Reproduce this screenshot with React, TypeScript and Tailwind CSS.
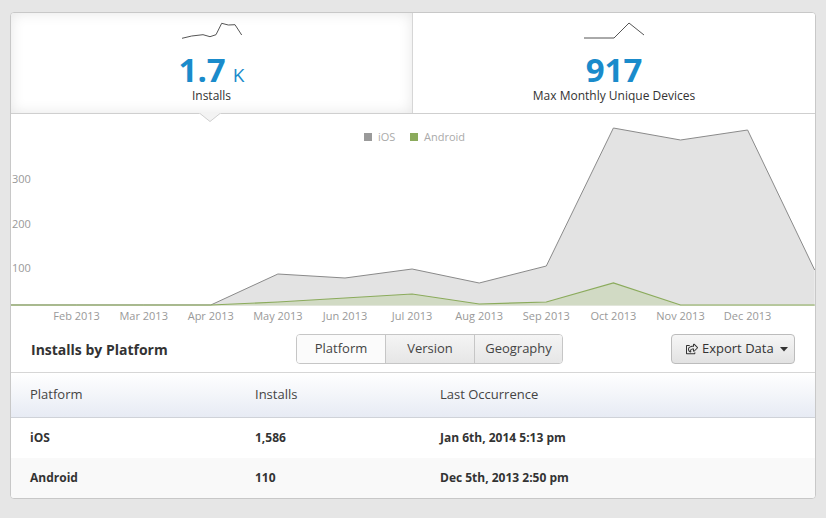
import React from "react";
import { FaRegShareSquare } from "react-icons/fa";

const months = ["Feb 2013","Mar 2013","Apr 2013","May 2013","Jun 2013","Jul 2013","Aug 2013","Sep 2013","Oct 2013","Nov 2013","Dec 2013"];
const iosY = [305,305,305,305,274,278,269,283,266,128,140,130,270];
const andY = [305,305,305,305,302,298,294,304,302,283,305,305,305];
const mx = (i: number) => 9.5 + 67.1 * i;

function areaPath(ys: number[]) {
  const pts = ys.map((y, i) => `${mx(i)},${y}`).join(" L");
  return `M${mx(0)},305.5 L${pts} L${mx(ys.length - 1)},305.5 Z`;
}
function linePath(ys: number[]) {
  return "M" + ys.map((y, i) => `${mx(i)},${y}`).join(" L");
}

function Chart() {
  return (
    <svg width={804} height={212} viewBox="11 114 804 212" className="block">
      <path d={areaPath(iosY)} fill="#e3e3e3" />
      <path d={linePath(iosY)} fill="none" stroke="#8a8a8a" strokeWidth={1} />
      <path d={areaPath(andY)} fill="#d1dac4" />
      <path d={linePath(andY)} fill="none" stroke="#8bab5c" strokeWidth={1.2} />
      <g fontFamily="'Open Sans', sans-serif" fontSize={11} fill="#999">
        <text x={12} y={183}>300</text>
        <text x={12} y={228}>200</text>
        <text x={12} y={272}>100</text>
        {months.map((m, i) => (
          <text key={m} x={mx(i + 1)} y={320} textAnchor="middle">{m}</text>
        ))}
        <rect x={364} y={133} width={8} height={8} fill="#9a9a9a" />
        <text x={378} y={141} fill="#aaa">iOS</text>
        <rect x={410} y={133} width={8} height={8} fill="#8bab5c" />
        <text x={424} y={141} fill="#aaa">Android</text>
      </g>
    </svg>
  );
}

function Tile({ spark, value, unit, label, active }: { spark: string; value: string; unit?: string; label: string; active?: boolean }) {
  return (
    <div className={`flex flex-col items-center pt-[8px] h-[100px] ${active ? "shadow-[inset_0_0_14px_rgba(0,0,0,0.1)] bg-white" : "bg-white"}`}>
      <svg width={60} height={18} viewBox="0 0 60 18" className="block overflow-visible">
        <path d={spark} fill="none" stroke="#555" strokeWidth={1} />
      </svg>
      <div className="mt-[15px] h-[32px] leading-[32px] text-[#1a8bcb] whitespace-nowrap">
        <span className="text-[33px] font-bold">{value}</span>
        {unit && <span className="text-[19px] ml-[7px]">{unit}</span>}
      </div>
      <div className="mt-[3px] text-[12px] leading-[14px] text-[#333]">{label}</div>
    </div>
  );
}

export default function App() {
  return (
    <div className="min-h-[518px] bg-[#e6e6e6] px-[10px] pt-[12px] pb-[20px]" style={{ fontFamily: "'Open Sans', 'Liberation Sans', sans-serif" }}>
      <div className="w-[806px] bg-white border border-[#c8c8c8] rounded-[4px] overflow-hidden">
        <div className="relative grid grid-cols-[402px_1fr] border-b border-[#cfcfcf]">
          <div className="border-r border-[#d6d6d6]">
            <Tile
              active
              spark="M0,17.3 L9.7,15 L21,13.7 L28,15.7 L34,13.7 L39.7,2.3 L46.3,4 L53,3.7 L59.7,14"
              value="1.7"
              unit="K"
              label="Installs"
            />
          </div>
          <Tile spark="M0,17 L30,17 L45,2 L60,14" value="917" label="Max Monthly Unique Devices" />
          <svg width={22} height={10} viewBox="0 0 22 10" className="absolute left-[188px] top-[100px]">
            <path d="M0,0 L11,9 L22,0 Z" fill="#f3f3f3" />
            <path d="M1,0.5 L11,8.5 L21,0.5" fill="none" stroke="#d0d0d0" strokeWidth={1} />
          </svg>
        </div>
        <Chart />
        <div className="flex items-center h-[46px] pl-[20px] pr-[20px]">
          <div className="w-[265px] text-[14px] font-bold text-[#333]">Installs by Platform</div>
          <div className="flex h-[30px] border border-[#c6c6c6] rounded-[4px] overflow-hidden text-[13px] text-[#444]">
            <div className="w-[89px] flex items-center justify-center bg-[#fbfbfb] border-r border-[#c6c6c6]">Platform</div>
            <div className="w-[89px] flex items-center justify-center bg-gradient-to-b from-[#f4f4f4] to-[#e6e6e6] border-r border-[#c6c6c6]">Version</div>
            <div className="w-[87px] flex items-center justify-center bg-gradient-to-b from-[#f4f4f4] to-[#e6e6e6]">Geography</div>
          </div>
          <div className="ml-auto flex items-center h-[30px] w-[124px] pl-[14px] border border-[#bcbcbc] rounded-[4px] bg-gradient-to-b from-[#f6f6f6] to-[#e2e2e2] text-[13px] text-[#333]">
            <FaRegShareSquare size={12} className="text-[#333]" />
            <span className="ml-[4px]">Export Data</span>
            <svg width={8} height={5} viewBox="0 0 8 5" className="ml-[6px]">
              <path d="M0,0 L8,0 L4,4.5 Z" fill="#333" />
            </svg>
          </div>
        </div>
        <div className="border-t border-[#d6d6d6]">
          <div className="grid grid-cols-[225px_185px_1fr] h-[45px] items-center pl-[19px] bg-gradient-to-b from-[#ffffff] to-[#e7ebf4] border-b border-[#cfd2d8] text-[13px] text-[#444]">
            <div>Platform</div>
            <div>Installs</div>
            <div>Last Occurrence</div>
          </div>
          <div className="grid grid-cols-[225px_185px_1fr] h-[40px] items-center pl-[19px] bg-white text-[12px] font-bold text-[#333]">
            <div>iOS</div>
            <div>1,586</div>
            <div>Jan 6th, 2014 5:13 pm</div>
          </div>
          <div className="grid grid-cols-[225px_185px_1fr] h-[40px] items-center pl-[19px] bg-[#f9f9f9] text-[12px] font-bold text-[#333]">
            <div>Android</div>
            <div>110</div>
            <div>Dec 5th, 2013 2:50 pm</div>
          </div>
        </div>
      </div>
    </div>
  );
}
